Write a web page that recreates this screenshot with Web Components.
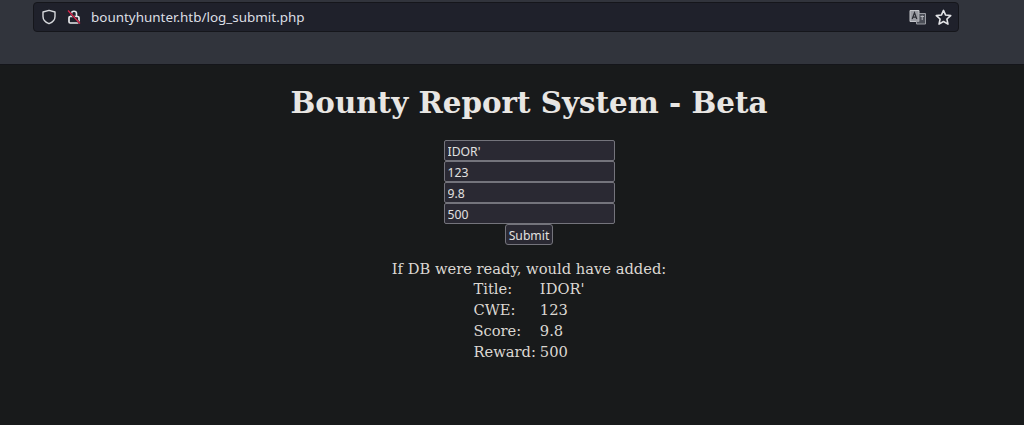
<!DOCTYPE html>
<html>
<head>
<meta charset="utf-8">
<title>Bounty Report System - Beta</title>
<style>
  html, body { margin: 0; padding: 0; height: 100%; background: #181a1b; overflow: hidden; }
  body { display: flex; flex-direction: column; }
</style>
</head>
<body>
<browser-bar url="bountyhunter.htb/log_submit.php"></browser-bar>
<report-page>
  <report-form></report-form>
  <report-result>
    <result-row label="Title:" value="IDOR'"></result-row>
    <result-row label="CWE:" value="123"></result-row>
    <result-row label="Score:" value="9.8"></result-row>
    <result-row label="Reward:" value="500"></result-row>
  </report-result>
</report-page>

<script>
/**
 * Browser toolbar with the address field
 */
class BrowserBar extends HTMLElement {
    constructor() {
        super();
        this.attachShadow({ mode: 'open' });
    }

    connectedCallback() {
        this.shadowRoot.innerHTML = `
      <style>
        :host {
          display: block;
          height: 62px;
          background: #31343c;
          border-bottom: 1px solid #14151a;
          padding: 2px 0 0 33px;
          box-sizing: content-box;
        }
        .field {
          width: 926px;
          height: 30px;
          box-sizing: border-box;
          background: #1f212b;
          border: 1px solid #15161b;
          border-radius: 4px;
          display: flex;
          align-items: center;
          padding: 0 6px 0 7px;
          color: #dcdfe4;
          font: 13.45px "Noto Sans", sans-serif;
        }
        svg { display: block; flex: none; }
        .lock { margin-left: 9px; }
        .url { margin-left: 9px; flex: 1; }
        .star { margin-left: 8px; }
      </style>
      <div class="field">
        <svg width="16" height="16" viewBox="0 0 16 16" fill="none" stroke="#d6d8dc" stroke-width="1.4">
          <path d="M8 1.3 L14 3 V7.5 C14 11 11.4 13.4 8 14.7 C4.6 13.4 2 11 2 7.5 V3 Z" stroke-linejoin="round"/>
        </svg>
        <svg class="lock" width="16" height="16" viewBox="0 0 16 16" fill="none">
          <path d="M5.5 7.5 V4.5 C5.5 1.5 10.5 1.5 10.5 4.5 V7.5" stroke="#e8e9ec" stroke-width="1.6"/>
          <rect x="3" y="7.5" width="10" height="6.5" rx="1.2" stroke="#e8e9ec" stroke-width="1.7"/>
          <path d="M2 1.5 L14 14.5" stroke="#1f212b" stroke-width="1.9"/>
          <path d="M2 1.5 L14 14.5" stroke="#e0264c" stroke-width="1.2"/>
        </svg>
        <span class="url">${this.getAttribute('url')}</span>
        <svg width="18" height="16" viewBox="0 0 18 16">
          <path d="M1 1.5 H10 V12.5 H1 Z" fill="#9a9ca3" stroke="#c4c6cb" stroke-width="1"/>
          <path d="M10 4.5 H16.5 V15 H7.5 V12.5 H10 Z" fill="#4b4e57" stroke="#9a9ca3" stroke-width="1"/>
          <path d="M3.2 10 L5.5 3.8 L7.8 10 M4 8.2 H7" fill="none" stroke="#2b2d35" stroke-width="1.2"/>
          <path d="M11.5 7.5 H15 M13.2 6.5 V11" stroke="#b4b6bb" stroke-width="1"/>
        </svg>
        <svg class="star" width="17" height="17" viewBox="0 0 16 16" fill="none" stroke="#e2e3e6" stroke-width="1.5" stroke-linejoin="round">
          <path d="M8 1.3 L10 5.7 L14.8 6.2 L11.2 9.4 L12.2 14.2 L8 11.8 L3.8 14.2 L4.8 9.4 L1.2 6.2 L6 5.7 Z"/>
        </svg>
      </div>
    `;
    }
}
customElements.define('browser-bar', BrowserBar);

/**
 * Page body with the heading
 */
class ReportPage extends HTMLElement {
    constructor() {
        super();
        this.attachShadow({ mode: 'open' });
    }

    connectedCallback() {
        this.shadowRoot.innerHTML = `
      <style>
        :host {
          display: flex;
          flex-direction: column;
          align-items: center;
          flex: 1;
          padding-left: 34px;
          background: #181a1b;
          color: #dcd8d3;
          font: 16px "DejaVu Serif", serif;
        }
        h1 {
          margin: 19px 0 19px;
          font-size: 29.35px;
          line-height: 37px;
          font-weight: bold;
          color: #e8e6e3;
        }
      </style>
      <h1>Bounty Report System - Beta</h1>
      <slot></slot>
    `;
    }
}
customElements.define('report-page', ReportPage);

/**
 * The four inputs and the submit button
 */
class ReportForm extends HTMLElement {
    constructor() {
        super();
        this.attachShadow({ mode: 'open' });
    }

    connectedCallback() {
        this.shadowRoot.innerHTML = `
      <style>
        :host {
          display: flex;
          flex-direction: column;
          align-items: center;
        }
        input, button {
          box-sizing: border-box;
          font: 12.2px "Noto Sans", sans-serif;
          color: #e2e1e0;
          background: #2a2933;
          border: 1px solid #74747c;
          border-radius: 2px;
          margin: 0;
          outline: none;
        }
        input {
          display: block;
          width: 171px;
          height: 21px;
          padding: 1px 3px 0;
        }
        button {
          height: 21px;
          padding: 1px 3px 0;
          border-radius: 3px;
        }
      </style>
      <input value="IDOR'">
      <input value="123">
      <input value="9.8">
      <input value="500">
      <button>Submit</button>
    `;
    }
}
customElements.define('report-form', ReportForm);

/**
 * Result block under the form
 */
class ReportResult extends HTMLElement {
    constructor() {
        super();
        this.attachShadow({ mode: 'open' });
    }

    connectedCallback() {
        this.shadowRoot.innerHTML = `
      <style>
        :host {
          display: flex;
          flex-direction: column;
          align-items: center;
          margin-top: 14px;
          font-size: 14.7px;
          line-height: 21px;
        }
        .intro { line-height: 20px; }
        .rows {
          display: grid;
          grid-template-columns: max-content max-content;
          column-gap: 4px;
          margin-top: -1px;
        }
      </style>
      <div class="intro">If DB were ready, would have added:</div>
      <div class="rows"><slot></slot></div>
    `;
    }
}
customElements.define('report-result', ReportResult);

/**
 * One label and value of the result
 */
class ResultRow extends HTMLElement {
    constructor() {
        super();
        this.attachShadow({ mode: 'open' });
    }

    connectedCallback() {
        this.shadowRoot.innerHTML = `
      <style>
        :host { display: contents; }
      </style>
      <div>${this.getAttribute('label')}</div>
      <div>${this.getAttribute('value')}</div>
    `;
    }
}
customElements.define('result-row', ResultRow);
</script>
</body>
</html>
